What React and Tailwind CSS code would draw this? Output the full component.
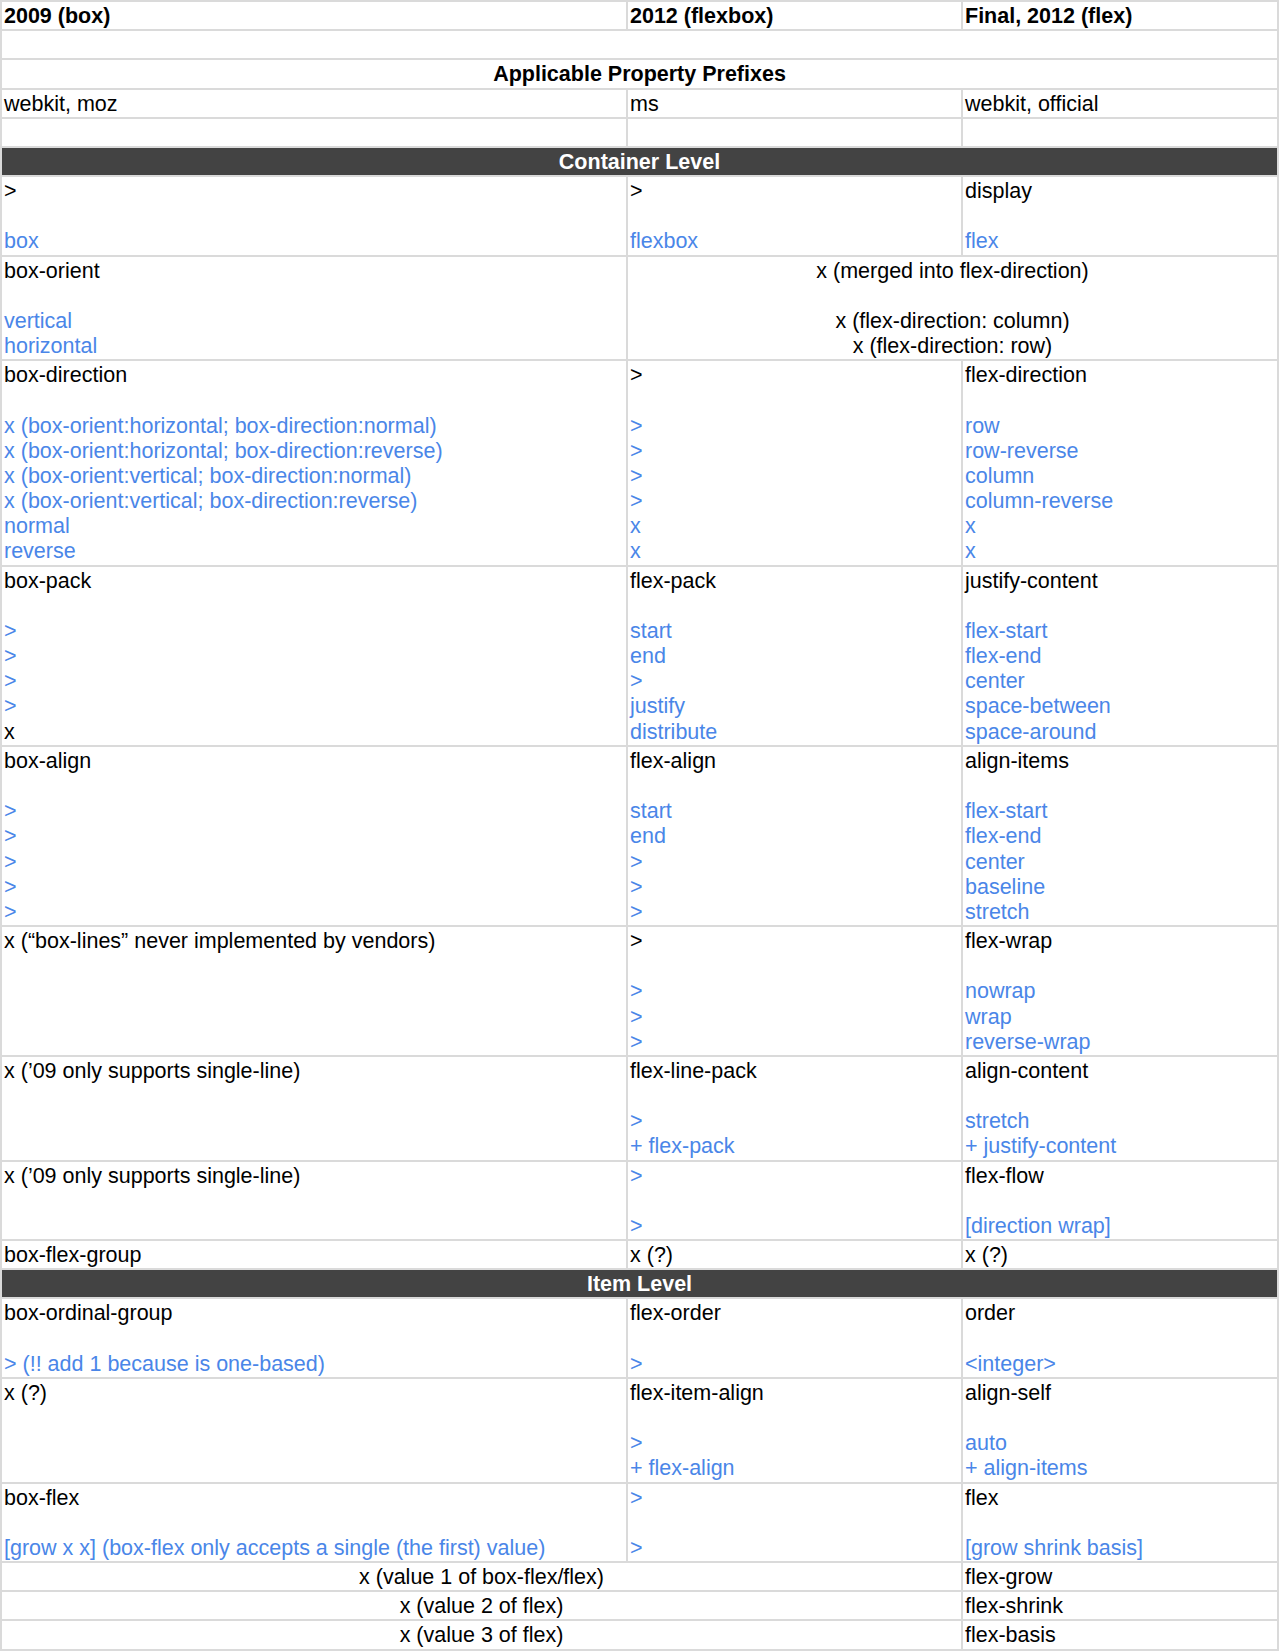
const B = (t) => ({ t, blue: true });

// each row: array of cells; a cell is { lines, span, center, bold }
const rows = [
  { head: true, cells: [{ lines: ["2009 (box)"] }, { lines: ["2012 (flexbox)"] }, { lines: ["Final, 2012 (flex)"] }] },
  { cells: [{ lines: [""], span: 3 }] },
  { cells: [{ lines: ["Applicable Property Prefixes"], span: 3, center: true, bold: true }] },
  { cells: [{ lines: ["webkit, moz"] }, { lines: ["ms"] }, { lines: ["webkit, official"] }] },
  { cells: [{ lines: [""] }, { lines: [""] }, { lines: [""] }] },
  { band: "Container Level" },
  {
    cells: [
      { lines: [">", "", B("box")] },
      { lines: [">", "", B("flexbox")] },
      { lines: ["display", "", B("flex")] },
    ],
  },
  {
    cells: [
      { lines: ["box-orient", "", B("vertical"), B("horizontal")] },
      {
        lines: ["x (merged into flex-direction)", "", "x (flex-direction: column)", "x (flex-direction: row)"],
        span: 2,
        center: true,
      },
    ],
  },
  {
    cells: [
      {
        lines: [
          "box-direction",
          "",
          B("x (box-orient:horizontal; box-direction:normal)"),
          B("x (box-orient:horizontal; box-direction:reverse)"),
          B("x (box-orient:vertical; box-direction:normal)"),
          B("x (box-orient:vertical; box-direction:reverse)"),
          B("normal"),
          B("reverse"),
        ],
      },
      { lines: [">", "", B(">"), B(">"), B(">"), B(">"), B("x"), B("x")] },
      {
        lines: ["flex-direction", "", B("row"), B("row-reverse"), B("column"), B("column-reverse"), B("x"), B("x")],
      },
    ],
  },
  {
    cells: [
      { lines: ["box-pack", "", B(">"), B(">"), B(">"), B(">"), "x"] },
      { lines: ["flex-pack", "", B("start"), B("end"), B(">"), B("justify"), B("distribute")] },
      {
        lines: ["justify-content", "", B("flex-start"), B("flex-end"), B("center"), B("space-between"), B("space-around")],
      },
    ],
  },
  {
    cells: [
      { lines: ["box-align", "", B(">"), B(">"), B(">"), B(">"), B(">")] },
      { lines: ["flex-align", "", B("start"), B("end"), B(">"), B(">"), B(">")] },
      { lines: ["align-items", "", B("flex-start"), B("flex-end"), B("center"), B("baseline"), B("stretch")] },
    ],
  },
  {
    cells: [
      { lines: ["x (\u201cbox-lines\u201d never implemented by vendors)"] },
      { lines: [">", "", B(">"), B(">"), B(">")] },
      { lines: ["flex-wrap", "", B("nowrap"), B("wrap"), B("reverse-wrap")] },
    ],
  },
  {
    cells: [
      { lines: ["x (\u201909 only supports single-line)"] },
      { lines: ["flex-line-pack", "", B(">"), B("+ flex-pack")] },
      { lines: ["align-content", "", B("stretch"), B("+ justify-content")] },
    ],
  },
  {
    cells: [
      { lines: ["x (\u201909 only supports single-line)"] },
      { lines: [B(">"), "", B(">")] },
      { lines: ["flex-flow", "", B("[direction wrap]")] },
    ],
  },
  { cells: [{ lines: ["box-flex-group"] }, { lines: ["x (?)"] }, { lines: ["x (?)"] }] },
  { band: "Item Level" },
  {
    cells: [
      { lines: ["box-ordinal-group", "", B("> (!! add 1 because is one-based)")] },
      { lines: ["flex-order", "", B(">")] },
      { lines: ["order", "", B("<integer>")] },
    ],
  },
  {
    cells: [
      { lines: ["x (?)"] },
      { lines: ["flex-item-align", "", B(">"), B("+ flex-align")] },
      { lines: ["align-self", "", B("auto"), B("+ align-items")] },
    ],
  },
  {
    cells: [
      { lines: ["box-flex", "", B("[grow x x] (box-flex only accepts a single (the first) value)")] },
      { lines: [B(">"), "", B(">")] },
      { lines: ["flex", "", B("[grow shrink basis]")] },
    ],
  },
  { cells: [{ lines: ["x (value 1 of box-flex/flex)"], span: 2, center: true }, { lines: ["flex-grow"] }] },
  { cells: [{ lines: ["x (value 2 of flex)"], span: 2, center: true }, { lines: ["flex-shrink"] }] },
  { cells: [{ lines: ["x (value 3 of flex)"], span: 2, center: true }, { lines: ["flex-basis"] }] },
];

const spanClass = { 1: "col-span-1", 2: "col-span-2", 3: "col-span-3" };

const Line = ({ line }) => {
  if (typeof line === "string") {
    return <div className="h-[25.18px] whitespace-pre">{line || "\u00a0"}</div>;
  }
  return <div className="h-[25.18px] whitespace-pre text-[#4a86e8]">{line.t}</div>;
};

export default function App() {
  return (
    <div className="bg-white min-h-[1652px] font-['Liberation_Sans',Arial,sans-serif] text-[21.5px] leading-[25.18px] text-black">
      <div className="w-[1279px] border-l-2 border-t-2 border-[#dadada]">
        {rows.map((row, i) =>
          row.band ? (
            <div
              key={i}
              className="border-r-2 border-b-2 border-[#dadada] bg-[#434343] pt-[2px] text-center font-bold text-white"
            >
              <div className="h-[25.18px]">{row.band}</div>
            </div>
          ) : (
            <div key={i} className="grid grid-cols-[626px_335px_316px] border-b-2 border-[#dadada]">
              {row.cells.map((cell, j) => (
                <div
                  key={j}
                  className={
                    spanClass[cell.span || 1] +
                    " border-r-2 border-[#dadada] pl-[2px] pr-[2px] pt-[2px] " +
                    (cell.center ? "text-center " : "") +
                    (cell.bold || row.head ? "font-bold" : "")
                  }
                >
                  {cell.lines.map((line, k) => (
                    <Line key={k} line={line} />
                  ))}
                </div>
              ))}
            </div>
          )
        )}
      </div>
    </div>
  );
}
